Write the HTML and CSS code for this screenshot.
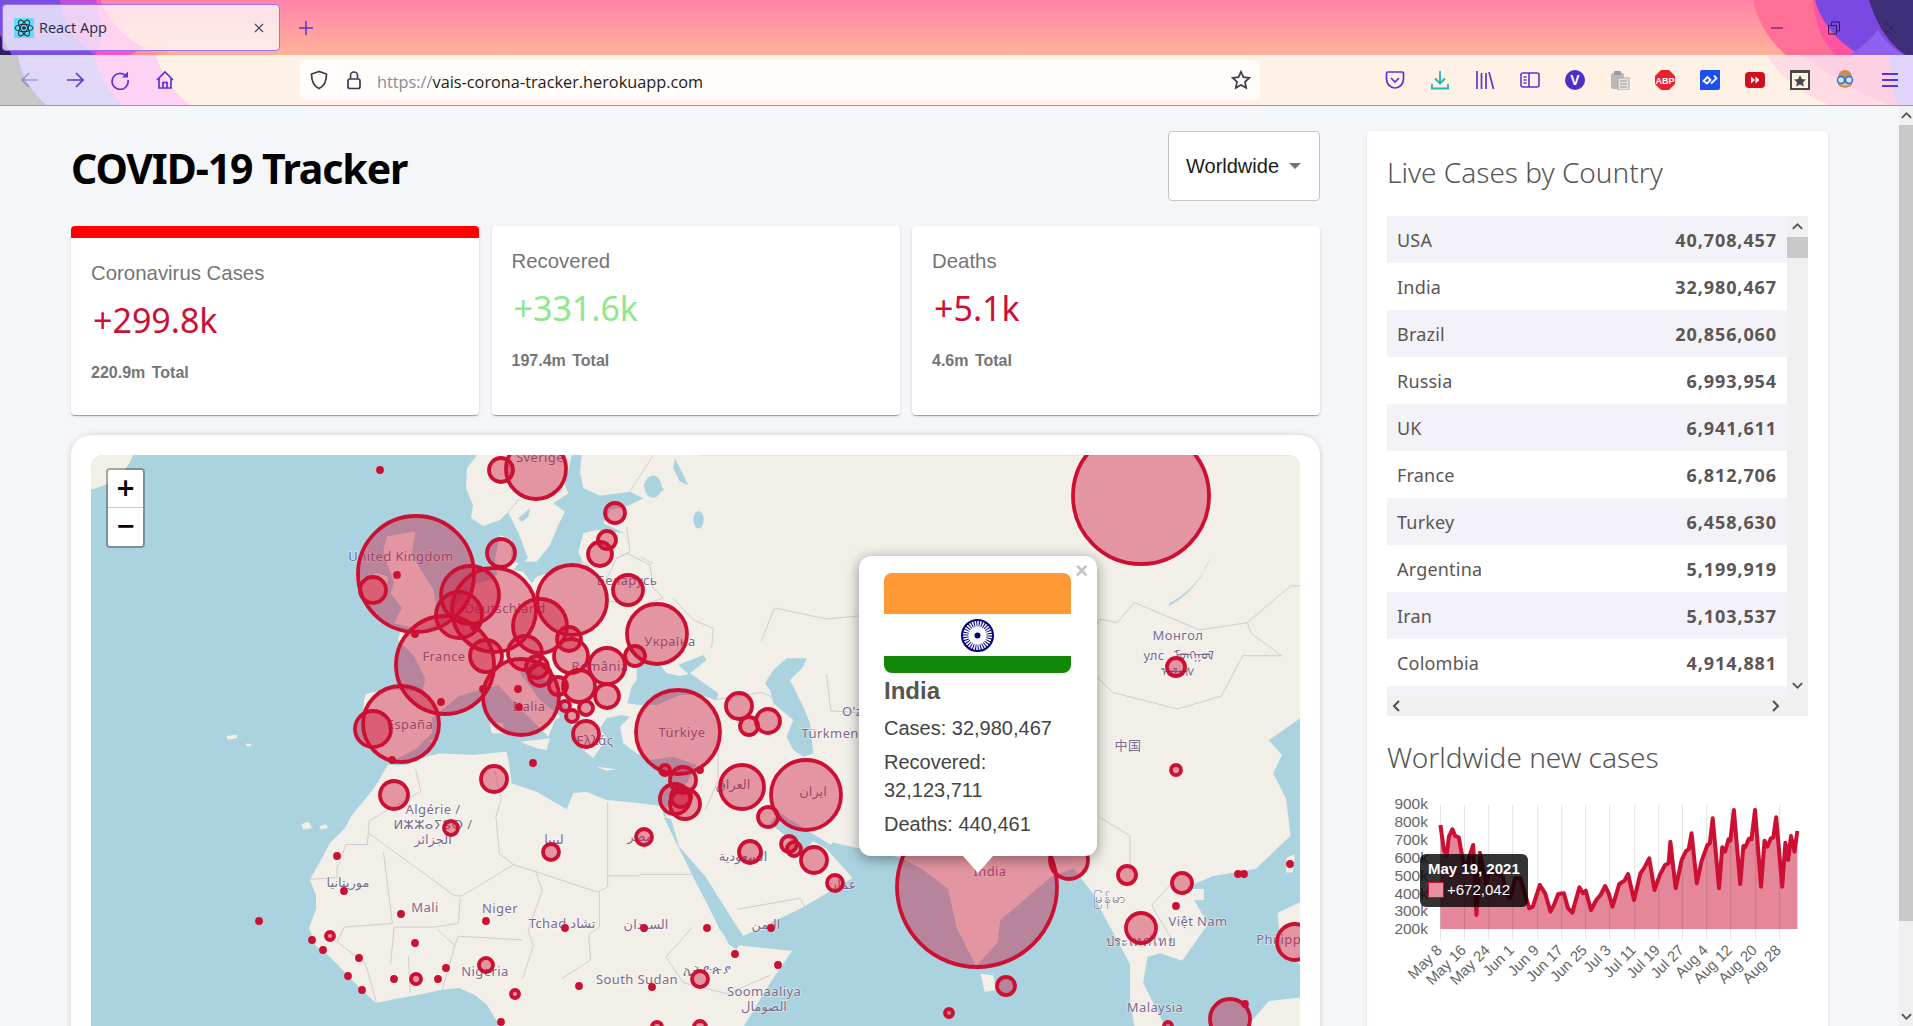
FILE: index.html
```html
<!DOCTYPE html>
<html lang="en">

<head>
    <meta charset="UTF-8">
    <meta name="viewport" content="width=device-width, initial-scale=1.0">
    <title>React App</title>
    <link rel="stylesheet" href="styles.css">
</head>

<body>
    <!-- browser window -->
    <div class="browser_top">
        <svg class="theme_bg" viewBox="0 0 1913 106" preserveAspectRatio="none">
            <defs>
                <linearGradient id="sky" x1="0" y1="0" x2="0" y2="1">
                    <stop offset="0" stop-color="#ff84aa" />
                    <stop offset="1" stop-color="#ffb29a" />
                </linearGradient>
            </defs>
            <rect width="1913" height="55" fill="url(#sky)" />
            <path d="M0 0H100C108 20 125 40 150 55H0Z" fill="#c24fd6" />
            <path d="M0 0H60C62 20 72 40 95 55H0Z" fill="#7a4fe0" />
            <path d="M0 35L12 55H0Z" fill="#2d1f5c" />
            <path d="M95 55C105 40 100 20 96 0H100C108 20 125 40 158 55Z" fill="#ff52c4" />
            <path d="M130 55L156 40L170 55Z" fill="#ffa080" opacity=".8" />
            <path d="M1753 0C1757 20 1768 40 1786 55H1913V0Z" fill="#ff6f96" />
            <path d="M1793 0H1913V55H1836C1820 40 1815 20 1813 0Z" fill="#ff4fa0" opacity=".9" />
            <path d="M1815 0H1913V55H1860C1835 40 1820 20 1815 0Z" fill="#7c48e2" />
            <path d="M1869 0H1913V55H1905C1885 40 1875 20 1869 0Z" fill="#3f2f7a" />
            <path d="M1878 30C1885 42 1895 50 1905 55H1850C1860 48 1870 40 1878 30Z" fill="#8f62ee" />
            <rect y="55" width="1913" height="51" fill="#fff1e6" />
            <path d="M0 55H155C163 75 175 95 190 105H0Z" fill="#fdd2f5" />
            <path d="M0 55H95C98 72 108 92 122 105H0Z" fill="#e0d8f8" />
            <path d="M0 55H18C20 75 32 92 46 105H0Z" fill="#c9c8c8" />
            <path d="M1766 55H1913V105H1830C1800 95 1780 75 1766 55Z" fill="#ffdce4" />
            <path d="M1800 55H1913V105H1890C1860 95 1830 75 1800 55Z" fill="#fdd0e4" />
            <path d="M1890 55H1913V105H1897C1893 90 1890 75 1890 55Z" fill="#e0d4fc" />
            <rect y="105" width="1913" height="1" fill="#b8907f" />
        </svg>

        <div class="tab_row">
            <div class="tab">
                <svg class="favicon" viewBox="0 0 20 20">
                    <rect width="20" height="20" rx="1" fill="#61dafb" />
                    <g fill="none" stroke="#23272f" stroke-width="1">
                        <ellipse cx="10" cy="10" rx="9" ry="3.6" />
                        <ellipse cx="10" cy="10" rx="9" ry="3.6" transform="rotate(60 10 10)" />
                        <ellipse cx="10" cy="10" rx="9" ry="3.6" transform="rotate(120 10 10)" />
                    </g>
                    <circle cx="10" cy="10" r="1.8" fill="#23272f" />
                </svg>
                <span class="tab_title">React App</span>
                <svg class="tab_close" viewBox="0 0 10 10">
                    <path d="M1 1L9 9M9 1L1 9" />
                </svg>
            </div>
            <svg class="new_tab" viewBox="0 0 16 16">
                <path d="M8 1V15M1 8H15" />
            </svg>
            <div class="window_btns">
                <svg viewBox="0 0 14 14"><path d="M1 7H13" /></svg>
                <svg viewBox="0 0 14 14"><path d="M1.5 4.5H9.5V13H1.5ZM4.5 4V1H12.5V10H10" /></svg>
                <svg viewBox="0 0 14 14"><path d="M.5 .5L13.5 13.5M13.5 .5L.5 13.5" /></svg>
            </div>
        </div>

        <div class="nav_row">
            <div class="nav_left">
                <svg class="nav_icon faded" viewBox="0 0 20 20"><path d="M18 10H2M9 3L2 10L9 17" /></svg>
                <svg class="nav_icon" viewBox="0 0 20 20"><path d="M2 10H18M11 3L18 10L11 17" /></svg>
                <svg class="nav_icon" viewBox="0 0 20 20"><path d="M16 6A8 8 0 1 0 18 10" /><path class="solid" d="M18 1.500V7.500H12Z" /></svg>
                <svg class="nav_icon" viewBox="0 0 20 20"><path d="M2 10L10 2L18 10M4 8.500V18H16V8.500M8 18V12.500H12V18" /></svg>
            </div>
            <div class="url_bar">
                <svg class="url_icon" viewBox="0 0 20 20"><path d="M10 1.500L2.500 4C2.500 12 4.500 16 10 18.500C15.500 16 17.500 12 17.500 4Z" /></svg>
                <svg class="url_icon" viewBox="0 0 20 20"><rect x="4" y="9" width="12" height="9.500" rx="2" /><path d="M6.500 9V5.500A3.500 3.500 0 0 1 13.500 5.500V9" /></svg>
                <span class="url_text"><span class="url_scheme">https://</span>vais-corona-tracker.herokuapp.com</span>
                <svg class="url_icon url_star" viewBox="0 0 20 20"><path d="M10 1.800L12.500 7.200L18.300 7.900L14 11.900L15.200 17.800L10 14.900L4.800 17.800L6 11.900L1.700 7.900L7.500 7.200Z" /></svg>
            </div>
            <div class="nav_right">
                <svg class="ext_icon" viewBox="0 0 20 20"><path d="M3 2H17A1.500 1.500 0 0 1 18.500 3.500V9C18.500 14 14.500 18 10 18C5.500 18 1.500 14 1.500 9V3.500A1.500 1.500 0 0 1 3 2ZM6 8L10 12L14 8" fill="none" stroke="#5b34d4" stroke-width="1.700" /></svg>
                <svg class="ext_icon" viewBox="0 0 20 20"><path d="M10 1V13M5 8.500L10 13.500L15 8.500M2 14V18.500H18V14" fill="none" stroke="#1fb5b0" stroke-width="1.800" /></svg>
                <svg class="ext_icon" viewBox="0 0 20 20"><path d="M2 1V19M6.500 3V19M11 3V19M14 2L18.500 19" fill="none" stroke="#5b34d4" stroke-width="1.700" /></svg>
                <svg class="ext_icon" viewBox="0 0 20 20"><rect x="1" y="3" width="18" height="14" rx="2" fill="none" stroke="#5b34d4" stroke-width="1.600" /><path d="M9 3V17M3.500 7H6.500M3.500 10H6.500M3.500 13H6.500" stroke="#5b34d4" stroke-width="1.600" /></svg>
                <svg class="ext_icon" viewBox="0 0 20 20"><circle cx="10" cy="10" r="10" fill="#4c2fc4" /><text class="ext_v" x="10" y="15">V</text></svg>
                <svg class="ext_icon" viewBox="0 0 20 20"><rect x="1" y="3" width="13" height="16" rx="2" fill="#b9b9b9" /><rect x="4" y="1" width="7" height="4" rx="1" fill="#999" /><rect x="8" y="8" width="11" height="12" fill="#e4e4e4" stroke="#aaa" /><path d="M10 11H17M10 14H17M10 17H17" stroke="#999" /></svg>
                <svg class="ext_icon" viewBox="0 0 20 20"><path d="M6 0H14L20 6V14L14 20H6L0 14V6Z" fill="#e8232f" /><text class="ext_abp" x="10" y="13.500">ABP</text></svg>
                <svg class="ext_icon" viewBox="0 0 20 20"><path d="M2 0H20V18A2 2 0 0 1 18 20H0V2A2 2 0 0 1 2 0Z" fill="#1d4ef0" /><path d="M3.500 11L7.500 7L10.500 10L7 13.500ZM11 13.500L16.500 8.500L14 5.500" fill="none" stroke="#fff" stroke-width="1.800" /></svg>
                <svg class="ext_icon" viewBox="0 0 20 20"><rect y="2" width="20" height="16" rx="4" fill="#d40f1d" /><path d="M6 6.500L10 10L6 13.500ZM10.500 6.500L14.500 10L10.500 13.500Z" fill="#fff" /></svg>
                <svg class="ext_icon" viewBox="0 0 20 20"><rect width="20" height="20" fill="#4a4a4a" /><rect x="2" y="3" width="16" height="15" fill="#fff4ea" /><path d="M10 5L11.800 9L16 9.400L13 12.300L13.800 16.500L10 14.400L6.200 16.500L7 12.300L4 9.400L8.200 9Z" fill="#4a4a4a" /></svg>
                <svg class="ext_icon" viewBox="0 0 20 20"><path d="M3 8C3 3 6 0 10 0C14 0 17 3 17 8V14C15 19 5 19 3 14Z" fill="#c98a62" /><path d="M5 13H15C14 17 6 17 5 13Z" fill="#e8b690" /><circle cx="6" cy="10" r="3.500" fill="#cfe8f6" stroke="#2a6fd0" stroke-width="1.500" /><circle cx="14" cy="10" r="3.500" fill="#cfe8f6" stroke="#2a6fd0" stroke-width="1.500" /></svg>
                <svg class="ext_icon" viewBox="0 0 20 20"><path d="M2 4H18M2 10H18M2 16H18" stroke="#5b34d4" stroke-width="1.800" /></svg>
            </div>
        </div>
    </div>

    <div class="page_area">
        <div class="app">
            <div class="app_left">
                <div class="app_header">
                    <h1>COVID-19 Tracker</h1>
                    <div class="country_select">
                        <span>Worldwide</span>
                        <i class="caret"></i>
                    </div>
                </div>

                <div class="app_stats">
                    <div class="info_box selected">
                        <p class="info_title">Coronavirus Cases</p>
                        <p class="info_cases">+299.8k</p>
                        <p class="info_total">220.9m Total</p>
                    </div>
                    <div class="info_box">
                        <p class="info_title">Recovered</p>
                        <p class="info_cases green">+331.6k</p>
                        <p class="info_total">197.4m Total</p>
                    </div>
                    <div class="info_box">
                        <p class="info_title">Deaths</p>
                        <p class="info_cases">+5.1k</p>
                        <p class="info_total">4.6m Total</p>
                    </div>
                </div>

                <div class="map_panel">
                    <div class="map_box">
                        <svg class="map_svg" viewBox="91 455 1209 600">
                            <rect x="91" y="455" width="1209" height="600" fill="#aad3df" />

                            <!-- land -->
                            <g class="land">
                                <path d="M477 455L467 468 466 488 473 505 471 518 483 526 500 520 508 512 518 532 528 558 522 565 511 560 512 540 500 535 495 560 497 575 490 580 472 585 462 600 450 612 440 625 420 632 400 632 398 640 414 656 425 678 423 692 387 689 366 694 364 700 362 729 366 747 384 755 391 762 387 766 378 782 371 792 362 803 352 815 345 828 330 843 322 858 312 876 310 880 316 895 316 909 309 928 316 946 328 955 337 964 350 978 362 990 376 1003 400 998 423 994 440 990 459 988 475 995 487 1005 498 1023 500 1060H730L744 1026 770 983 792 951 735 945 720 930 663 813 700 455Z" />
                                <path d="M91 455H133C128 470 115 480 105 485L91 490Z" />
                                <path transform="translate(80 450) scale(.357 .367)" d="M860 235L940 222 928 285 990 380 1000 430 1012 470 960 490 880 472 902 430 870 390 880 360 860 310 850 270ZM790 350L830 335 862 345 855 400 800 420 780 385Z" />
                                <path transform="translate(80 450) scale(.357 .367)" d="M620 1020L640 1012 650 1030 625 1035ZM670 1025L690 1020 695 1030 675 1035ZM410 780L440 775 440 785 415 790ZM465 800L480 802 478 808 465 806Z" />
                                <g transform="translate(640 450) scale(.4337 .3674)">
                                    <path d="M100 14H1522V730L1450 790 1480 830 1460 880 1490 950 1500 1050 1420 1140 1320 1160 1260 1190 1310 1290 1250 1390 1200 1370 1170 1380 1160 1450 1210 1568 1200 1640H1150L1130 1500 1130 1400 1080 1290 1040 1200 1000 1140 950 1160 830 1280 825 1340 775 1405 730 1300 710 1195 650 1140 600 1110 445 1068 430 1085 490 1165 375 1245 235 1325 150 1160 90 1080 70 1005 60 1000Z" />
                                    <path d="M1470 1260L1522 1230V1400L1480 1370ZM1400 1640V1568L1450 1500 1522 1490V1640ZM785 1425L815 1430 820 1470 795 1475ZM1265 1195L1300 1195 1300 1225 1275 1225ZM1490 1110L1510 1100 1505 1150 1490 1150Z" />
                                </g>
                            </g>

                            <!-- seas and lakes -->
                            <g class="sea">
                                <path transform="translate(440 455) scale(.3333)" d="M395 0H425L420 50 430 100 480 122 570 110 610 130 570 150 510 165 490 205 555 235 470 225 430 235 415 290 430 325 370 340 290 365 275 385 250 350 220 345 240 320 290 320 330 270 355 210 375 170 340 145 385 115 375 90Z" />
                                <path transform="translate(440 455) scale(.3333)" d="M610 90L640 60 672 105 640 125ZM705 10L745 90 720 80 700 40ZM235 190L270 160 265 185 245 200Z" />
                                <g transform="translate(440 650) scale(.3333)">
                                    <path d="M-150 336L-72 297 -24 249 -24 204 57 138 99 126 141 117 175 105 230 165 270 205 300 235 325 260 345 210 362 200 300 150 240 70 262 55 300 75 345 130 375 165 400 240 430 300 460 325 500 265 480 235 500 205 545 195 570 200 540 230 550 280 590 310 630 330 700 320 770 345 740 400 680 470 600 460 500 450 440 425 400 430 380 478 290 425 215 400 205 330 200 305 150 310 100 315 0 310 -60 325 -100 345 -150 345Z" />
                                    <path d="M562 160L575 110 590 90 590 55 630 30 660 45 680 70 720 78 745 72 715 45 790 15 800 30 750 70 800 105 835 130 830 150 780 135 720 135 650 165 600 165Z" />
                                    <path d="M975 100L1000 60 1040 25 1100 25 1090 50 1050 90 1090 170 1110 220 1120 310 1090 320 1060 300 1040 260 1060 210 1000 160 990 120Z" />
                                </g>
                                <g transform="translate(640 450) scale(.4337 .3674)">
                                    <path d="M55 1000L72 1005 90 1080 150 1160 225 1300 240 1325 222 1360 205 1345 130 1180Z" />
                                    <path d="M320 985L345 1005 440 1075 430 1085 400 1065 375 1090 345 1060 300 1015Z" />
                                    <path d="M1220 425C1260 400 1300 350 1315 290L1300 330C1280 370 1250 400 1220 418Z" />
                                    <ellipse cx="135" cy="190" rx="12" ry="24" />
                                    <ellipse cx="30" cy="100" rx="20" ry="30" />
                                </g>
                            </g>
                            <g class="land">
                                <path transform="translate(440 650) scale(.3333)" d="M240 275L330 265 320 300 290 295ZM150 215L190 220 190 250 155 250ZM470 350L530 358 500 362ZM-35 272L-15 268 -18 280Z" />
                            </g>

                            <!-- borders -->
                            <g class="borders">
                                <path transform="translate(80 450) scale(.357 .367)" d="M940 870L955 930 810 1010 805 1075 745 1075 720 1140 720 1165 640 1170M810 1045L1050 1215 1070 1215 1215 1130 1175 1100 1165 1000 1180 950 1160 870M850 1095L875 1290 740 1300M1065 1220L1060 1290 990 1300 880 1300 870 1400M1215 1130L1265 1145 1450 1205 1478 1190 1478 960M1275 1145L1295 1200 1255 1310 1270 1350 1240 1440M1455 1205L1455 1300 1425 1320 1430 1390 1350 1440M1000 1305L1050 1350 1060 1325 1240 1335M1050 1350L1015 1470M920 1380L925 1480M1478 1160H1568M740 1300L720 1340 800 1400 830 1505" />
                                <path transform="translate(440 455) scale(.3333)" d="M640 0L570 110M500 370L530 310 560 295 630 330 640 400 670 430 620 445M700 430L760 495 820 520 815 580M560 215L570 290 530 310M240 130L205 170M420 320L470 340M500 440H560" />
                                <path transform="translate(640 450) scale(.4337 .3674)" d="M1055 620L1090 660 1240 705 1340 670 1390 560 1480 560 1410 500 1400 470 1290 490 1140 415 1100 470 1060 460 1000 590 1055 620M280 520L310 430 430 460 520 450M1400 470L1500 370H1522M1060 1000L1130 1050 1130 1150M430 610L440 710 505 715M0 290L30 310M170 680L280 660 320 680M180 820L180 900 150 980M0 1155H120M225 1250L370 1220 390 1270M1240 1160L1180 1240 1230 1340M120 1300L60 1380 100 1450 200 1480 300 1430" />
                            </g>

                            <!-- place names -->
                            <g class="labels">
                                <text x="540" y="462">Sverige</text>
                                <text x="401" y="561">United Kingdom</text>
                                <text x="505" y="613">Deutschland</text>
                                <text x="444" y="661">France</text>
                                <text x="627" y="585">Беларусь</text>
                                <text x="670" y="646">Україна</text>
                                <text x="600" y="671">România</text>
                                <text x="529" y="711">Italia</text>
                                <text x="410" y="729">España</text>
                                <text x="595" y="745">Ελλάς</text>
                                <text x="682" y="737">Türkiye</text>
                                <text x="846" y="738">Türkmenistan</text>
                                <text x="880" y="716">O'zbekiston</text>
                                <text x="1178" y="640">Монгол</text>
                                <text x="1154" y="660">улс</text>
                                <text x="1194" y="660">ᠮᠣᠩᠭᠣᠯ</text>
                                <text x="1178" y="677">ᠤᠯᠤᠰ</text>
                                <text x="1128" y="750">中国</text>
                                <text x="733" y="789">العراق</text>
                                <text x="813" y="796">ایران</text>
                                <text x="743" y="861">السعودية</text>
                                <text x="640" y="841">مصر</text>
                                <text x="554" y="844">ليبيا</text>
                                <text x="433" y="814">Algérie /</text>
                                <text x="433" y="829">ⵍⵣⵣⴰⵢⴻⵔ /</text>
                                <text x="433" y="844">الجزائر</text>
                                <text x="348" y="887">موريتانيا</text>
                                <text x="425" y="912">Mali</text>
                                <text x="500" y="913">Niger</text>
                                <text x="562" y="928">Tchad تشاد</text>
                                <text x="646" y="929">السودان</text>
                                <text x="485" y="976">Nigeria</text>
                                <text x="637" y="984">South Sudan</text>
                                <text x="707" y="974">ኢትዮጵያ</text>
                                <text x="764" y="996">Soomaaliya</text>
                                <text x="764" y="1011">الصومال</text>
                                <text x="766" y="929">اليمن</text>
                                <text x="990" y="876">India</text>
                                <text x="1110" y="903">မြန်မာ</text>
                                <text x="1198" y="926">Việt Nam</text>
                                <text x="1141" y="946">ประเทศไทย</text>
                                <text x="1155" y="1012">Malaysia</text>
                                <text x="1292" y="944">Philippines</text>
                                <text x="842" y="889">عمان</text>
                            </g>

                            <!-- country bubbles -->
                            <g class="bubbles">
                                <circle cx="416" cy="574" r="58" /><circle cx="373" cy="590" r="13" />
                                <circle cx="536" cy="469" r="30" /><circle cx="501" cy="470" r="12" />
                                <circle cx="615" cy="513" r="10" /><circle cx="607" cy="540" r="9" />
                                <circle cx="600" cy="554" r="12" /><circle cx="501" cy="553" r="14" />
                                <circle cx="628" cy="590" r="15" /><circle cx="470" cy="595" r="29" />
                                <circle cx="494" cy="610" r="42" /><circle cx="459" cy="615" r="23" />
                                <circle cx="572" cy="600" r="35" /><circle cx="540" cy="626" r="27" />
                                <circle cx="569" cy="639" r="12" /><circle cx="571" cy="656" r="17" />
                                <circle cx="607" cy="666" r="18" /><circle cx="525" cy="653" r="17" />
                                <circle cx="486" cy="656" r="16" /><circle cx="445" cy="665" r="49" />
                                <circle cx="401" cy="724" r="38" /><circle cx="373" cy="729" r="18" />
                                <circle cx="521" cy="697" r="38" /><circle cx="537" cy="667" r="11" />
                                <circle cx="540" cy="675" r="11" /><circle cx="558" cy="686" r="9" />
                                <circle cx="579" cy="686" r="16" /><circle cx="607" cy="696" r="12" />
                                <circle cx="586" cy="708" r="7" /><circle cx="572" cy="716" r="6" />
                                <circle cx="565" cy="706" r="5" /><circle cx="586" cy="734" r="13" />
                                <circle cx="657" cy="634" r="30" /><circle cx="635" cy="656" r="10" />
                                <circle cx="394" cy="795" r="14" /><circle cx="494" cy="779" r="13" />
                                <circle cx="451" cy="828" r="7" /><circle cx="551" cy="852" r="8" />
                                <circle cx="330" cy="936" r="4" /><circle cx="416" cy="979" r="5" />
                                <circle cx="486" cy="965" r="7" /><circle cx="515" cy="994" r="4" />
                                <circle cx="1141" cy="496" r="68" /><circle cx="678" cy="732" r="42" />
                                <circle cx="739" cy="706" r="13" /><circle cx="768" cy="721" r="12" />
                                <circle cx="749" cy="726" r="9" /><circle cx="742" cy="787" r="22" />
                                <circle cx="806" cy="795" r="35" /><circle cx="768" cy="817" r="10" />
                                <circle cx="683" cy="780" r="13" /><circle cx="675" cy="799" r="15" />
                                <circle cx="685" cy="804" r="15" /><circle cx="681" cy="797" r="10" />
                                <circle cx="665" cy="770" r="5" /><circle cx="644" cy="837" r="8" />
                                <circle cx="750" cy="852" r="11" /><circle cx="789" cy="844" r="8" />
                                <circle cx="794" cy="849" r="7" /><circle cx="814" cy="860" r="13" />
                                <circle cx="835" cy="883" r="8" /><circle cx="1176" cy="667" r="9" />
                                <circle cx="1176" cy="770" r="5" /><circle cx="977" cy="887" r="80" />
                                <circle cx="1069" cy="860" r="19" /><circle cx="1127" cy="875" r="9" />
                                <circle cx="1182" cy="883" r="10" /><circle cx="1141" cy="928" r="15" />
                                <circle cx="1295" cy="942" r="18" /><circle cx="1006" cy="986" r="9" />
                                <circle cx="949" cy="1013" r="4" /><circle cx="1230" cy="1019" r="20" />
                                <circle cx="700" cy="979" r="8" /><circle cx="1168" cy="1026" r="4" />
                                <circle cx="657" cy="1027" r="5" /><circle cx="700" cy="1027" r="6" />
                            </g>
                            <g class="bubbles dots">
                                <circle cx="380" cy="470" /><circle cx="474" cy="627" /><circle cx="415" cy="634" />
                                <circle cx="533" cy="763" /><circle cx="392" cy="760" /><circle cx="441" cy="702" />
                                <circle cx="518" cy="689" /><circle cx="519" cy="707" /><circle cx="397" cy="575" />
                                <circle cx="483" cy="689" /><circle cx="337" cy="856" /><circle cx="344" cy="891" />
                                <circle cx="259" cy="921" /><circle cx="312" cy="940" /><circle cx="323" cy="950" />
                                <circle cx="359" cy="958" /><circle cx="348" cy="976" /><circle cx="362" cy="990" />
                                <circle cx="394" cy="979" /><circle cx="438" cy="979" /><circle cx="446" cy="968" />
                                <circle cx="415" cy="943" /><circle cx="401" cy="914" /><circle cx="486" cy="921" />
                                <circle cx="565" cy="928" /><circle cx="579" cy="986" /><circle cx="501" cy="1022" />
                                <circle cx="700" cy="770" /><circle cx="1176" cy="906" /><circle cx="1238" cy="874" />
                                <circle cx="1244" cy="874" /><circle cx="1290" cy="864" /><circle cx="1245" cy="1004" />
                                <circle cx="644" cy="928" /><circle cx="707" cy="928" /><circle cx="771" cy="928" />
                                <circle cx="735" cy="954" /><circle cx="778" cy="965" /><circle cx="652" cy="987" />
                            </g>
                        </svg>

                        <div class="zoom_ctrl">
                            <span>+</span>
                            <span>−</span>
                        </div>

                        <div class="popup">
                            <span class="popup_close">×</span>
                            <svg class="popup_flag" viewBox="0 0 187 100">
                                <rect width="187" height="41" fill="#ff9933" />
                                <rect y="41" width="187" height="42" fill="#fff" />
                                <rect y="83" width="187" height="17" fill="#138808" />
                                <circle cx="93.500" cy="62.500" r="15.500" fill="#fff" stroke="#000080" stroke-width="2" />
                                <circle cx="93.500" cy="62.500" r="12" fill="none" stroke="#000080" stroke-width="6" stroke-dasharray="1 1.500" />
                                <circle cx="93.500" cy="62.500" r="3" fill="#000080" />
                            </svg>
                            <p class="popup_name">India</p>
                            <p class="popup_line">Cases: 32,980,467</p>
                            <p class="popup_line">Recovered: 32,123,711</p>
                            <p class="popup_line">Deaths: 440,461</p>
                            <i class="popup_tip"></i>
                        </div>
                    </div>
                </div>
            </div>

            <div class="app_right">
                <h3>Live Cases by Country</h3>
                <div class="table_box">
                    <div class="table_main">
                        <div class="table_rows">
                            <div class="table_row"><span>USA</span><strong>40,708,457</strong></div>
                            <div class="table_row"><span>India</span><strong>32,980,467</strong></div>
                            <div class="table_row"><span>Brazil</span><strong>20,856,060</strong></div>
                            <div class="table_row"><span>Russia</span><strong>6,993,954</strong></div>
                            <div class="table_row"><span>UK</span><strong>6,941,611</strong></div>
                            <div class="table_row"><span>France</span><strong>6,812,706</strong></div>
                            <div class="table_row"><span>Turkey</span><strong>6,458,630</strong></div>
                            <div class="table_row"><span>Argentina</span><strong>5,199,919</strong></div>
                            <div class="table_row"><span>Iran</span><strong>5,103,537</strong></div>
                            <div class="table_row"><span>Colombia</span><strong>4,914,881</strong></div>
                            <div class="table_row cut"></div>
                        </div>
                        <div class="scroll_y">
                            <svg class="sb_arrow" viewBox="0 0 12 8"><path d="M1 6.500L6 1.500L11 6.500" /></svg>
                            <div class="scroll_thumb"></div>
                            <svg class="sb_arrow" viewBox="0 0 12 8"><path d="M1 1.500L6 6.500L11 1.500" /></svg>
                        </div>
                    </div>
                    <div class="scroll_x">
                        <svg class="sb_arrow" viewBox="0 0 8 12"><path d="M6.500 1L1.500 6L6.500 11" /></svg>
                        <svg class="sb_arrow" viewBox="0 0 8 12"><path d="M1.500 1L6.500 6L1.500 11" /></svg>
                    </div>
                </div>

                <h3 class="chart_title">Worldwide new cases</h3>
                <div class="chart_box">
                    <svg class="chart_svg" viewBox="1387 790 421 220">
                        <g class="chart_y">
                            <text x="1428" y="809">900k</text>
                            <text x="1428" y="827">800k</text>
                            <text x="1428" y="845">700k</text>
                            <text x="1428" y="863">600k</text>
                            <text x="1428" y="881">500k</text>
                            <text x="1428" y="899">400k</text>
                            <text x="1428" y="916">300k</text>
                            <text x="1428" y="934">200k</text>
                        </g>
                        <g transform="translate(1360 730) scale(.3527 .3333)">
                            <path class="chart_area" d="M228 597V285L238 360 246 375 252 320 262 298 270 318 280 322 290 380 300 420 310 380 321 345 330 555 340 368 350 420 358 460 370 420 385 430 405 440 415 490 425 505 440 445 455 445 470 500 480 535 490 530 510 465 525 490 540 545 550 525 562 492 578 490 590 535 602 548 622 472 632 490 640 482 655 540 670 510 682 495 695 468 705 490 716 530 735 462 750 452 760 432 777 510 795 430 805 415 820 385 835 480 850 435 865 405 875 400 880 335 895 475 912 390 925 362 932 358 940 310 955 460 968 395 985 345 992 340 1000 265 1018 475 1027 352 1035 365 1045 328 1050 332 1060 240 1078 462 1087 348 1092 352 1103 326 1110 328 1120 240 1137 470 1147 332 1155 350 1165 325 1172 322 1180 262 1197 470 1206 338 1214 390 1222 318 1232 365 1240 303V597Z" />
                            <path class="chart_grid" d="M228 225V630M296 225V630M365 225V630M433 225V630M504 225V630M572 225V630M640 225V630M708 225V630M779 225V630M847 225V630M914 225V630M983 225V630M1051 225V630M1122 225V630M1190 225V630" />
                            <path class="chart_line" d="M228 285L238 360 246 375 252 320 262 298 270 318 280 322 290 380 300 420 310 380 321 345 330 555 340 368 350 420 358 460 370 420 385 430 405 440 415 490 425 505 440 445 455 445 470 500 480 535 490 530 510 465 525 490 540 545 550 525 562 492 578 490 590 535 602 548 622 472 632 490 640 482 655 540 670 510 682 495 695 468 705 490 716 530 735 462 750 452 760 432 777 510 795 430 805 415 820 385 835 480 850 435 865 405 875 400 880 335 895 475 912 390 925 362 932 358 940 310 955 460 968 395 985 345 992 340 1000 265 1018 475 1027 352 1035 365 1045 328 1050 332 1060 240 1078 462 1087 348 1092 352 1103 326 1110 328 1120 240 1137 470 1147 332 1155 350 1165 325 1172 322 1180 262 1197 470 1206 338 1214 390 1222 318 1232 365 1240 303" />
                        </g>
                        <g class="chart_x">
                            <text transform="translate(1443 951) rotate(-45)">May 8</text>
                            <text transform="translate(1467 951) rotate(-45)">May 16</text>
                            <text transform="translate(1491 951) rotate(-45)">May 24</text>
                            <text transform="translate(1515 951) rotate(-45)">Jun 1</text>
                            <text transform="translate(1540 951) rotate(-45)">Jun 9</text>
                            <text transform="translate(1564 951) rotate(-45)">Jun 17</text>
                            <text transform="translate(1588 951) rotate(-45)">Jun 25</text>
                            <text transform="translate(1612 951) rotate(-45)">Jul 3</text>
                            <text transform="translate(1637 951) rotate(-45)">Jul 11</text>
                            <text transform="translate(1661 951) rotate(-45)">Jul 19</text>
                            <text transform="translate(1685 951) rotate(-45)">Jul 27</text>
                            <text transform="translate(1709 951) rotate(-45)">Aug 4</text>
                            <text transform="translate(1733 951) rotate(-45)">Aug 12</text>
                            <text transform="translate(1758 951) rotate(-45)">Aug 20</text>
                            <text transform="translate(1782 951) rotate(-45)">Aug 28</text>
                        </g>
                    </svg>
                    <div class="chart_tip">
                        <strong>May 19, 2021</strong>
                        <div class="chart_tip_row"><i></i>+672,042</div>
                    </div>
                </div>
            </div>
        </div>

        <div class="page_scroll">
            <svg class="sb_arrow" viewBox="0 0 12 8"><path d="M1 6.500L6 1.500L11 6.500" /></svg>
            <div class="page_thumb"></div>
            <svg class="sb_arrow" viewBox="0 0 12 8"><path d="M1 1.500L6 6.500L11 1.500" /></svg>
        </div>
    </div>
</body>

</html>
```

FILE: styles.css
```css
* {
    margin: 0;
    padding: 0;
    box-sizing: border-box;
}

html,
body {
    height: 1026px;
    overflow: hidden;
}

body {
    display: flex;
    flex-direction: column;
    font-family: "Liberation Sans", Arial, sans-serif;
    background: #f5f6fa;
}

/* browser chrome */
.browser_top {
    position: relative;
    height: 106px;
    flex: none;
}

.theme_bg {
    position: absolute;
    left: 0;
    top: 0;
    width: 100%;
    height: 100%;
}

.tab_row,
.nav_row {
    position: relative;
    display: flex;
    align-items: center;
}

.tab_row {
    height: 55px;
    padding: 4px 0 4px 2px;
}

.tab {
    display: flex;
    align-items: center;
    width: 278px;
    height: 47px;
    padding: 0 15px 0 11px;
    border: 1px solid #9a70f0;
    border-radius: 4px;
    background: rgba(255, 255, 255, .74);
}

.favicon {
    width: 20px;
    height: 20px;
}

.tab_title {
    flex: 1;
    margin-left: 5px;
    font-family: "Open Sans", sans-serif;
    font-size: 14.500px;
    color: #2a2a3c;
}

.tab_close {
    width: 10px;
    height: 10px;
    fill: none;
    stroke: #4a4a5c;
    stroke-width: 1.2;
}

.new_tab {
    width: 16px;
    height: 16px;
    margin-left: 18px;
    fill: none;
    stroke: #5b34d4;
    stroke-width: 1.5;
}

.window_btns {
    display: flex;
    gap: 43px;
    margin-left: auto;
    margin-right: 15px;
}

.window_btns svg {
    width: 14px;
    height: 14px;
    fill: none;
    stroke: #2d1f50;
    stroke-width: 1;
}

.nav_row {
    height: 50px;
}

.nav_left {
    display: flex;
    gap: 25px;
    width: 300px;
    padding-left: 20px;
}

.nav_icon {
    width: 20px;
    height: 20px;
    fill: none;
    stroke: #5b34d4;
    stroke-width: 1.7;
}

.nav_icon .solid {
    fill: #5b34d4;
    stroke: none;
}

.nav_icon.faded {
    opacity: .4;
}

.url_bar {
    display: flex;
    align-items: center;
    width: 960px;
    height: 40px;
    padding: 0 9px;
    border-radius: 4px;
    background: rgba(255, 255, 255, .75);
}

.url_icon {
    width: 20px;
    height: 20px;
    margin-right: 15px;
    fill: none;
    stroke: #3a3a50;
    stroke-width: 1.7;
}

.url_text {
    flex: 1;
    margin-left: -2px;
    padding-top: 3px;
    font-family: "Open Sans", sans-serif;
    font-size: 16.300px;
    color: #1c1b22;
}

.url_scheme {
    color: #8a8a96;
}

.url_star {
    margin-right: 0;
}

.nav_right {
    display: flex;
    gap: 25px;
    margin-left: 125px;
}

.ext_icon {
    width: 20px;
    height: 20px;
}

.ext_v {
    font-size: 14px;
    font-weight: bold;
    text-anchor: middle;
    fill: #fff;
}

.ext_abp {
    font-size: 9px;
    font-weight: bold;
    text-anchor: middle;
    fill: #fff;
}

/* page */
.page_area {
    display: flex;
    flex: 1;
    min-height: 0;
    overflow: hidden;
}

.app {
    display: flex;
    flex: 1;
    gap: 47px;
    padding: 25px 71px 0;
    min-width: 0;
}

.app_left {
    width: 1249px;
    flex: none;
}

.app_header {
    display: flex;
    align-items: center;
    justify-content: space-between;
    height: 70px;
    margin-bottom: 25px;
}

.app_header h1 {
    padding-top: 4px;
    font-family: "Noto Sans", sans-serif;
    font-size: 41px;
    letter-spacing: -1.100px;
    color: #000;
}

.country_select {
    display: flex;
    align-items: center;
    justify-content: space-between;
    width: 152px;
    height: 70px;
    padding: 0 18px 0 17px;
    border: 1px solid #c4c4c4;
    border-radius: 4px;
    background: #fff;
    font-size: 20px;
    color: #1a1a1a;
}

.caret {
    width: 0;
    height: 0;
    border-left: 6px solid transparent;
    border-right: 6px solid transparent;
    border-top: 6px solid #757575;
}

.app_stats {
    display: grid;
    grid-template-columns: repeat(3, 1fr);
    gap: 12.500px;
    height: 189px;
}

.info_box {
    padding: 23px 20px 0;
    border-radius: 4px;
    background: #fff;
    box-shadow: 0 2px 1px -1px rgba(0, 0, 0, .2), 0 1px 1px 0 rgba(0, 0, 0, .14), 0 1px 3px 0 rgba(0, 0, 0, .12);
}

.info_box.selected {
    border-top: 12px solid #ff0000;
}

.info_title {
    font-size: 20.400px;
    line-height: 24px;
    color: #757575;
}

.info_cases {
    margin-top: 15px;
    margin-left: 2px;
    font-family: "Noto Sans", sans-serif;
    font-size: 34px;
    line-height: 40px;
    color: #cc1034;
}

.info_cases.green {
    color: #8ce88c;
}

.info_total {
    margin-top: 23px;
    font-size: 16px;
    font-weight: bold;
    line-height: 20px;
    word-spacing: 2px;
    color: #757575;
}

.map_panel {
    margin-top: 20px;
    padding: 20px;
    border-radius: 20px;
    background: #fff;
    box-shadow: 0 0 8px -4px rgba(0, 0, 0, .5);
}

.map_box {
    position: relative;
    height: 600px;
    border-radius: 12px;
    overflow: hidden;
}

.map_svg {
    display: block;
    width: 100%;
    height: 100%;
}

.land {
    fill: #f2efe9;
}

.sea {
    fill: #aad3df;
}

.borders {
    fill: none;
    stroke: #d5c9d5;
    stroke-width: 1;
}

.borders path {
    vector-effect: non-scaling-stroke;
}

.labels text {
    font-family: "Noto Sans", "DejaVu Sans", "Noto Sans CJK SC", sans-serif;
    font-size: 13px;
    letter-spacing: .4px;
    text-anchor: middle;
    fill: #7b6a8c;
    stroke: rgba(255, 255, 255, .5);
    stroke-width: 1.500px;
    paint-order: stroke;
}

.bubbles circle {
    fill: rgba(204, 16, 52, .4);
    stroke: #cc1034;
    stroke-width: 3.800;
}

.dots circle {
    r: 2px;
}

.zoom_ctrl {
    position: absolute;
    left: 15px;
    top: 13px;
    display: flex;
    flex-direction: column;
    width: 39px;
    border: 2px solid rgba(0, 0, 0, .3);
    border-radius: 4px;
    background: #fff;
    background-clip: padding-box;
}

.zoom_ctrl span {
    height: 38px;
    font-family: "DejaVu Sans", sans-serif;
    font-size: 24px;
    font-weight: bold;
    line-height: 36px;
    text-align: center;
    color: #000;
}

.zoom_ctrl span:first-child {
    border-bottom: 1px solid #ccc;
}

.popup {
    position: absolute;
    left: 768px;
    top: 101px;
    width: 238px;
    height: 300px;
    padding: 17px 25px 0;
    border-radius: 12px;
    background: #fff;
    box-shadow: 0 3px 14px rgba(0, 0, 0, .4);
    color: #444;
}

.popup_close {
    position: absolute;
    right: 9px;
    top: 2px;
    font-size: 22px;
    font-weight: bold;
    line-height: 26px;
    color: #c3c3c3;
}

.popup_flag {
    display: block;
    width: 187px;
    height: 100px;
    border-radius: 8px;
}

.popup_name {
    margin-top: 4px;
    margin-bottom: 9px;
    font-size: 24px;
    font-weight: bold;
    line-height: 28px;
    color: #555;
}

.popup_line {
    margin-top: 6px;
    font-size: 20px;
    line-height: 28px;
}

.popup_tip {
    position: absolute;
    left: 104px;
    bottom: -17px;
    width: 0;
    height: 0;
    border-left: 15px solid transparent;
    border-right: 15px solid transparent;
    border-top: 17px solid #fff;
}

/* right column */
.app_right {
    width: 461px;
    flex: none;
    height: 960px;
    padding: 21px 20px 0;
    border-radius: 4px;
    background: #fff;
    box-shadow: 0 2px 1px -1px rgba(0, 0, 0, .2), 0 1px 1px 0 rgba(0, 0, 0, .14), 0 1px 3px 0 rgba(0, 0, 0, .12);
}

.app_right h3 {
    font-family: "Noto Sans", sans-serif;
    font-size: 28px;
    font-weight: 300;
    line-height: 40px;
    color: #555;
}

.table_box {
    margin-top: 24px;
    width: 421px;
}

.table_main {
    display: flex;
}

.table_rows {
    width: 400px;
    height: 480px;
    overflow: hidden;
    font-family: "Noto Sans", sans-serif;
    font-size: 18px;
    color: #5c5555;
}

.table_row {
    display: flex;
    align-items: center;
    justify-content: space-between;
    height: 47px;
    padding: 0 10px 0 10px;
}

.table_row span {
    letter-spacing: .2px;
}

.table_row strong {
    letter-spacing: .9px;
}

.table_row:nth-child(odd) {
    background: #f3f2f8;
}

.table_row.cut {
    height: 10px;
}

.scroll_y {
    display: flex;
    flex-direction: column;
    align-items: center;
    width: 21px;
    background: #f0f0f0;
}

.scroll_y .sb_arrow {
    margin: 6px 0;
}

.scroll_y .scroll_thumb {
    width: 100%;
    height: 21px;
    margin-bottom: auto;
    background: #c8c8c8;
}

.sb_arrow {
    width: 11px;
    height: 9px;
    flex: none;
    fill: none;
    stroke: #505050;
    stroke-width: 2;
}

.scroll_x {
    display: flex;
    align-items: center;
    justify-content: space-between;
    height: 20px;
    padding: 0 28px 0 5px;
    background: #f0f0f0;
}

.scroll_x .sb_arrow {
    width: 9px;
    height: 12px;
}

.app_right .chart_title {
    margin-top: 21px;
}

.chart_box {
    position: relative;
    margin-top: 13px;
}

.chart_svg {
    display: block;
    width: 421px;
    height: 220px;
    margin-left: 0;
}

.chart_y text {
    font-size: 15.500px;
    text-anchor: end;
    fill: #666;
}

.chart_x text {
    font-size: 15px;
    text-anchor: end;
    fill: #666;
}

.chart_area {
    fill: rgba(204, 16, 52, .5);
}

.chart_grid {
    fill: none;
    stroke: rgba(0, 0, 0, .12);
    vector-effect: non-scaling-stroke;
}

.chart_line {
    fill: none;
    stroke: #cc1034;
    stroke-width: 4px;
    stroke-linejoin: round;
    vector-effect: non-scaling-stroke;
}

.chart_tip {
    position: absolute;
    left: 33px;
    top: 64px;
    width: 108px;
    height: 53px;
    padding: 6px 8px;
    border-radius: 6px;
    background: rgba(0, 0, 0, .8);
    font-size: 15px;
    color: #fff;
}

.chart_tip strong {
    display: block;
    line-height: 17px;
}

.chart_tip_row {
    display: flex;
    align-items: center;
    gap: 3px;
    margin-top: 5px;
    line-height: 16px;
}

.chart_tip_row i {
    width: 16px;
    height: 16px;
    border: 1px solid #cc1034;
    background: #e7909f;
}

/* window scrollbar */
.page_scroll {
    display: flex;
    flex-direction: column;
    align-items: center;
    width: 14px;
    flex: none;
    background: #f0f0f0;
}

.page_scroll .sb_arrow {
    margin: 5px 0;
}

.page_thumb {
    width: 100%;
    height: 796px;
    margin-bottom: auto;
    background: #c8c8c8;
}
```
